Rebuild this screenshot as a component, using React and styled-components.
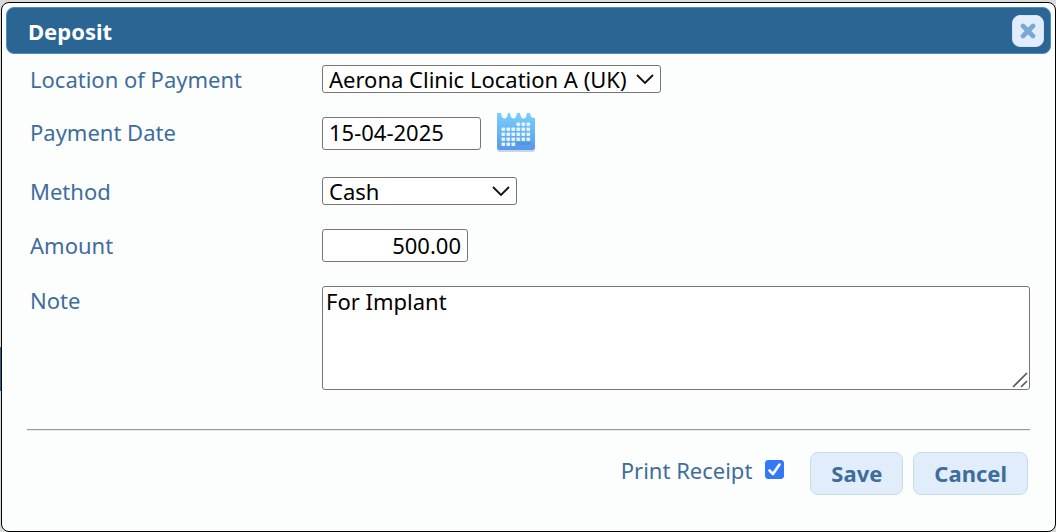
import React from "react";
import styled, { createGlobalStyle } from "styled-components";

const GlobalStyle = createGlobalStyle`
  * { box-sizing: border-box; }
  body {
    margin: 0;
    background: #d9dadb;
    font-family: "Noto Sans", "Open Sans", sans-serif;
    font-size: 22px;
    line-height: 28px;
    color: #3f6d9b;
  }
  button, input, select, textarea { font: inherit; }
`;

const Page = styled.div`
  min-height: 100vh;
  display: flex;
  padding: 2px 0 0 1px;
  background: linear-gradient(#2a6594, #2a6594) 0 347px / 1px 44px no-repeat;
`;

const Dialog = styled.section`
  flex: 1;
  min-width: 0;
  padding: 4px;
  background: #fcfefe;
  border: 1px solid #000;
  border-radius: 8px;
`;

const TitleBar = styled.header`
  display: flex;
  align-items: center;
  justify-content: space-between;
  height: 47px;
  padding: 0 6px 0 21px;
  background: #2a6594;
  border: 1px solid #4c8cca;
  border-radius: 8px;
`;

const Title = styled.h1`
  margin: 0;
  color: #fff;
  font-size: 22px;
  font-weight: 700;
`;

const CloseButton = styled.button`
  display: grid;
  place-items: center;
  width: 32px;
  height: 32px;
  padding: 0;
  background: #e1edfb;
  border: 1px solid #d3e4f4;
  border-radius: 8px;
`;

const Form = styled.form`
  padding: 11px 21px 0;
`;

const Row = styled.div`
  display: grid;
  grid-template-columns: 292px 1fr;
  align-items: ${(p) => (p.$top ? "start" : "center")};
  margin-top: ${(p) => p.$space || 0}px;
  padding-left: 3px;
`;

const FieldLabel = styled.label`
  padding-bottom: ${(p) => (p.$raised ? 2 : 0)}px;
`;

const Controls = styled.div`
  display: flex;
  align-items: center;
  gap: 15px;
  min-width: 0;
`;

const Overlay = styled.span`
  position: relative;
  display: flex;
  width: ${(p) => p.$width};

  > svg {
    position: absolute;
    pointer-events: none;
  }
`;

const SelectWrap = styled(Overlay)`
  > svg { right: 7px; top: 8px; }
`;

const AreaWrap = styled(Overlay)`
  > svg { right: 2px; bottom: 2px; }
`;

const Select = styled.select`
  appearance: none;
  width: 100%;
  height: 28px;
  padding: 0 26px 0 6px;
  line-height: 26px;
  color: #000;
  background: #fff;
  border: 1px solid #767676;
  border-radius: 3px;
`;

const TextInput = styled.input`
  width: ${(p) => p.$width};
  height: 33px;
  padding: 0 6px 2px;
  color: #000;
  text-align: ${(p) => (p.$right ? "right" : "left")};
  background: #fff;
  border: 1px solid #767676;
  border-radius: 3px;
`;

const TextArea = styled.textarea`
  width: 100%;
  height: 104px;
  padding: 0 3px;
  resize: none;
  color: #000;
  background: #fff;
  border: 1px solid #767676;
  border-radius: 3px;
`;

const IconButton = styled.button`
  display: flex;
  padding: 0;
  background: none;
  border: 0;
`;

const Divider = styled.hr`
  height: 2px;
  margin: 39px 0 0;
  border: 0;
  border-top: 1px solid #999b9b;
  border-bottom: 1px solid #e8eaea;
`;

const Footer = styled.footer`
  display: flex;
  align-items: center;
  justify-content: flex-end;
  gap: 10px;
  padding: 21px 2px 0 0;
`;

const CheckLabel = styled.label`
  display: flex;
  align-items: center;
  gap: 13px;
  margin-right: 16px;
  padding-bottom: 8px;
`;

const Checkbox = styled.input`
  appearance: none;
  width: 19px;
  height: 19px;
  margin: 0;
  background: #fff;
  border: 1px solid #767676;
  border-radius: 3px;

  &:checked { background: #3478f6; border-color: #3478f6; }
  & + svg { left: 0; top: 0; }
  &:not(:checked) + svg { display: none; }
`;

const Button = styled.button`
  height: 43px;
  padding: 0 20px 2px;
  color: #3f6d9b;
  font-weight: 700;
  background: #e1edfb;
  border: 1px solid #c5dbec;
  border-radius: 8px;
`;

const Chevron = () => (
  <svg width="18" height="12" viewBox="0 0 18 12" fill="none" stroke="#111" strokeWidth="1.8" aria-hidden="true">
    <path d="M1 2 9 10 17 2" />
  </svg>
);

const DropDown = ({ id, width, value }) => (
  <SelectWrap $width={width}>
    <Select id={id} defaultValue={value}>
      <option>{value}</option>
    </Select>
    <Chevron />
  </SelectWrap>
);

const calendarCells = [
  [3, 9], [4, 9], [5, 9],
  ...[14, 19, 24].flatMap((y) => [0, 1, 2, 3, 4, 5].map((c) => [c, y])),
  [0, 29], [1, 29], [2, 29],
];

const CalendarIcon = () => (
  <svg width="40" height="40" viewBox="0 0 40 40" aria-hidden="true">
    <defs>
      <linearGradient id="calendar-fill" x1="0" y1="0" x2="0" y2="1">
        <stop offset="0" stopColor="#7bcffb" />
        <stop offset="0.5" stopColor="#68b5f6" />
        <stop offset="1" stopColor="#5798ec" />
      </linearGradient>
    </defs>
    <rect x="1" y="32" width="38" height="7" rx="3" fill="#cbd5e0" />
    <path
      d="M1 0H5L6 4Q8.500 7 11 4L12 0H14L15 4Q17.500 7 20 4L21 0H24L25 4Q27.500 7 30 4L31 0H34L35 4Q37 5 39 5V34Q39 37 36 37H4Q1 37 1 34Z"
      fill="url(#calendar-fill)"
    />
    <path d="M21 29H35V32H21Z" fill="#4383d4" opacity="0.4" />
    {calendarCells.map(([c, y]) => (
      <rect key={`${c}-${y}`} x={5.5 + c * 5} y={y + 0.5} width="3.600" height="3.600" rx="0.8" fill="#e6f4ff" />
    ))}
  </svg>
);

export default function App() {
  return (
    <>
      <GlobalStyle />
      <Page>
        <Dialog role="dialog" aria-labelledby="dialog-title">
          <TitleBar>
            <Title id="dialog-title">Deposit</Title>
            <CloseButton type="button" aria-label="Close">
              <svg width="16" height="16" viewBox="0 0 16 16" stroke="#79a7d6" strokeWidth="4.600" strokeLinecap="round" aria-hidden="true">
                <path d="M3 3 13 13M13 3 3 13" />
              </svg>
            </CloseButton>
          </TitleBar>
          <Form onSubmit={(e) => e.preventDefault()}>
            <Row>
              <FieldLabel htmlFor="location">Location of Payment</FieldLabel>
              <DropDown id="location" width="339px" value="Aerona Clinic Location A (UK)" />
            </Row>
            <Row $space={20}>
              <FieldLabel $raised htmlFor="date">Payment Date</FieldLabel>
              <Controls>
                <TextInput id="date" $width="159px" defaultValue="15-04-2025" />
                <IconButton type="button" aria-label="Choose date">
                  <CalendarIcon />
                </IconButton>
              </Controls>
            </Row>
            <Row $space={24}>
              <FieldLabel htmlFor="method">Method</FieldLabel>
              <DropDown id="method" width="195px" value="Cash" />
            </Row>
            <Row $space={24}>
              <FieldLabel $raised htmlFor="amount">Amount</FieldLabel>
              <TextInput id="amount" $width="146px" $right defaultValue="500.00" />
            </Row>
            <Row $space={24} $top>
              <FieldLabel htmlFor="note">Note</FieldLabel>
              <AreaWrap $width="100%">
                <TextArea id="note" defaultValue="For Implant" />
                <svg width="16" height="16" viewBox="0 0 16 16" stroke="#555" strokeWidth="1.6" aria-hidden="true">
                  <path d="M1 15 15 1M9 15 15 9" />
                </svg>
              </AreaWrap>
            </Row>
            <Divider />
            <Footer>
              <CheckLabel>
                Print Receipt
                <Overlay $width="19px">
                  <Checkbox type="checkbox" defaultChecked />
                  <svg width="19" height="19" viewBox="0 0 19 19" fill="none" stroke="#fff" strokeWidth="2.6" strokeLinecap="round" strokeLinejoin="round" aria-hidden="true">
                    <path d="M4.5 10.5 8 14 14.5 4.5" />
                  </svg>
                </Overlay>
              </CheckLabel>
              <Button type="submit">Save</Button>
              <Button type="button">Cancel</Button>
            </Footer>
          </Form>
        </Dialog>
      </Page>
    </>
  );
}
